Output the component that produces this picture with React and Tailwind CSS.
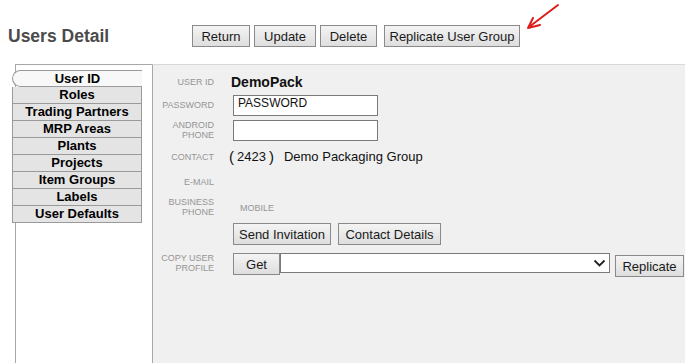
import React from "react";

const font = { fontFamily: '"Liberation Sans", Arial, "Noto Sans CJK SC", sans-serif' };

const tabs = ["User ID", "Roles", "Trading Partners", "MRP Areas", "Plants", "Projects", "Item Groups", "Labels", "User Defaults"];

function Btn({ children, className = "" }) {
  return (
    <button className={`h-[22px] border border-[#8a8a8a] bg-gradient-to-b from-[#f4f4f4] to-[#dedede] text-[13px] text-[#1a1a1a] leading-none ${className}`}>
      {children}
    </button>
  );
}

function Label({ children }) {
  return (
    <div className="w-[61px] text-right text-[9px] leading-[10px] uppercase text-[#959595]">{children}</div>
  );
}

export default function App() {
  return (
    <div className="relative w-[685px] h-[363px] overflow-hidden bg-white" style={font}>
      {/* header */}
      <div className="flex items-center h-[64px] pt-[8px] pl-[8px]">
        <h1 className="w-[184px] text-[17.5px] font-bold text-[#4b4b4b]">Users Detail</h1>
        <div className="flex">
          <Btn className="w-[58px]">Return</Btn>
          <Btn className="w-[62px] ml-[4px]">Update</Btn>
          <Btn className="w-[57px] ml-[4px]">Delete</Btn>
          <Btn className="w-[136px] ml-[7px]">Replicate User Group</Btn>
        </div>
      </div>

      <svg className="absolute left-[520px] top-0" width="50" height="36" viewBox="0 0 50 36">
        <g stroke="#dd1c1c" strokeWidth="2" fill="none" strokeLinecap="round" strokeLinejoin="round">
          <path d="M38 5 L9 27" />
          <path d="M20 25 L8 28 L13 18" />
        </g>
      </svg>

      {/* body */}
      <div className="flex h-[299px] ml-[15px]">
        <div className="w-[137px] border-l border-t border-[#a8a8a8] bg-white pt-[5px]">
          <div className="ml-[-4px] w-[130px]">
            {tabs.map((t, i) => (
              <div
                key={t}
                className={
                  i === 0
                    ? "h-[17px] flex items-center justify-center text-[13px] font-bold text-black bg-[#f8f8f8] border border-[#9a9a9a] rounded-l-[9px] border-r-0"
                    : "h-[17px] flex items-center justify-center text-[13px] font-bold text-black bg-[#e4e4e4] border border-t-0 border-[#9a9a9a]"
                }
              >
                {t}
              </div>
            ))}
          </div>
        </div>

        <div className="flex-1 border-l border-t border-[#a8a8a8] border-t-[#d8d8d8] bg-[#f0f0f0] pt-[7px]">
          <div className="flex items-center gap-[19px] h-[20px]">
            <Label>User ID</Label>
            <span className="text-[14px] font-bold text-[#111] ml-[-2px]">DemoPack</span>
          </div>

          <div className="flex items-center gap-[19px] h-[20px] mt-[3px]">
            <Label>Password</Label>
            <div className="w-[145px] h-[21px] border border-[#7a7a7a] bg-white pl-[4px] text-[12px] leading-[14px] text-[#111]">PASSWORD</div>
          </div>

          <div className="flex items-center gap-[19px] h-[22px] mt-[4px]">
            <Label>Android<br />Phone</Label>
            <div className="w-[145px] h-[21px] border border-[#7a7a7a] bg-white" />
          </div>

          <div className="flex items-center gap-[15px] h-[22px] mt-[5px]">
            <Label>Contact</Label>
            <div className="flex items-center text-[13px] text-[#111]">
              <span className="text-[15px]">(</span>
              <span className="ml-[3px]">2423</span>
              <span className="ml-[3px] text-[15px]">)</span>
              <span className="ml-[10px]">Demo Packaging Group</span>
            </div>
          </div>

          <div className="flex items-center gap-[19px] h-[20px] mt-[4px]">
            <Label>E-Mail</Label>
          </div>

          <div className="flex items-center gap-[26px] h-[22px] mt-[4px]">
            <Label>Business<br />Phone</Label>
            <span className="text-[9px] text-[#959595] mt-[4px]">MOBILE</span>
          </div>

          <div className="flex items-center h-[22px] mt-[5px] pl-[80px]">
            <Btn className="w-[98px]">Send Invitation</Btn>
            <Btn className="w-[103px] ml-[7px]">Contact Details</Btn>
          </div>

          <div className="flex items-start gap-[19px] mt-[8px]">
            <Label>Copy User<br />Profile</Label>
            <div className="flex items-start">
              <Btn className="w-[47px] h-[21px]">Get</Btn>
              <div className="w-[330px] h-[20px] border border-[#7a7a7a] bg-white flex items-center justify-end pr-[3px]">
                <svg width="13" height="9" viewBox="0 0 13 9">
                  <path d="M1.5 1.5 L6.5 6.5 L11.5 1.5" stroke="#222" strokeWidth="1.8" fill="none" />
                </svg>
              </div>
              <Btn className="w-[69px] ml-[5px] mt-[2px]">Replicate</Btn>
            </div>
          </div>
        </div>
      </div>
    </div>
  );
}
